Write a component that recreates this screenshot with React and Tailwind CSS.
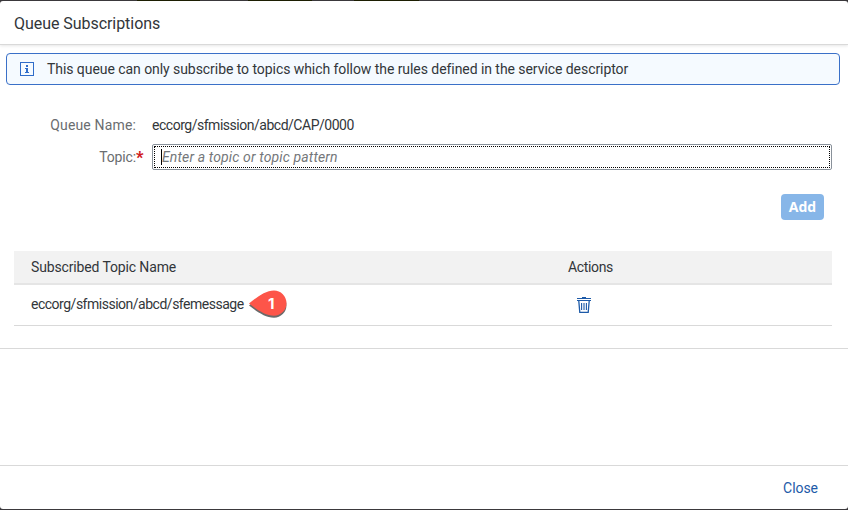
import React from "react";

function InfoIcon() {
  return (
    <svg className="block h-[14px] w-[14px]" viewBox="0 0 14 14" fill="none">
      <rect x="0.5" y="0.5" width="13" height="13" stroke="#2f6cc9" />
      <path d="M6 3h2v2H6zM5 6h3v4h1v1H5v-1h1V7H5z" fill="#2f6cc9" />
    </svg>
  );
}

function TrashIcon() {
  return (
    <svg className="block h-4 w-[14px]" viewBox="0 0 14 16" fill="none" stroke="#1d5aa8">
      <path d="M5 0.5h4M0 1.5h14M0 3.5h14" />
      <path d="M1.8 4l1 11.5h8.4l1-11.5" strokeWidth="1.3" />
      <path d="M4.6 6v7M7 6v7M9.4 6v7" strokeWidth="1.1" />
    </svg>
  );
}

function Marker() {
  return (
    <span className="relative ml-[4px] block h-[32px] w-[42px]">
      <svg className="block h-full w-full overflow-visible" viewBox="0 0 42 32">
        <path
          d="M1 14.5C8 9 17 1.5 26 1.5A12.4 12.6 0 0 1 26 26.8C17 26.8 8 20 1 14.5Z"
          fill="#6a6a6a"
          transform="translate(0 2)"
        />
        <path d="M1 14.5C8 9 17 1.5 26 1.5A12.4 12.6 0 0 1 26 26.8C17 26.8 8 20 1 14.5Z" fill="#fd5549" />
      </svg>
      <span className="absolute left-[20px] top-[6px] font-['Inter'] text-[15px] leading-[18px] font-bold text-white">
        1
      </span>
    </span>
  );
}

export default function App() {
  return (
    <div className="h-[510px] w-[848px] overflow-hidden bg-[#3b393c] font-['Roboto',sans-serif] text-[14px] leading-4 text-[#32363a]">
      <div className="flex h-px pl-[137px]">
        <span className="h-px w-[63px] bg-[#1d1f02]" />
        <span className="ml-12 h-px w-16 bg-[#1d1f02]" />
        <span className="ml-[42px] h-px w-[65px] bg-[#1d1f02]" />
      </div>
      <div className="flex h-[508px] flex-col rounded-[3px] bg-white">
        <header className="z-10 flex h-11 shrink-0 items-center border-b border-[#d9d9d9] pt-[2px] pl-[14px] text-[16px] shadow-[0_1px_3px_rgba(0,0,0,0.1)]">
          <span className="tracking-[-0.05px]">Queue Subscriptions</span>
        </header>

        <main className="flex h-[304px] shrink-0 flex-col border-b border-[#d9d9d9] pt-2">
          <div className="ml-[6px] flex h-8 w-[834px] shrink-0 items-center rounded border border-[#3a70c8] bg-[#f5faff] pl-[13px]">
            <InfoIcon />
            <span className="ml-[13px] tracking-[-0.06px]">
              This queue can only subscribe to topics which follow the rules defined in the service descriptor
            </span>
          </div>

          <div className="mt-8 flex h-4 shrink-0">
            <span className="w-[136px] text-right tracking-[0.15px] text-[#6a6d70]">Queue Name:</span>
            <span className="ml-4 tracking-[-0.48px]">eccorg/sfmission/abcd/CAP/0000</span>
          </div>

          <div className="mt-[11px] flex h-[26px] shrink-0 items-center">
            <span className="w-[136px] text-right tracking-[-0.15px] text-[#6a6d70]">Topic:</span>
            <span className="h-[14px] w-[7px] text-[16px] font-black text-[#d01820]">*</span>
            <div className="ml-[9px] h-[26px] w-[680px] rounded-[2px] border border-[#89919a] p-px">
              <div className="flex h-full items-center border border-dotted border-black pl-[6px] tracking-[0.13px] italic text-[#74777a]">
                <span className="h-4 w-px bg-black" />
                Enter a topic or topic pattern
              </div>
            </div>
          </div>

          <button className="mt-6 ml-[781px] h-[26px] w-[43px] shrink-0 rounded bg-[#87b6e8] font-['Open_Sans'] text-[14px] font-bold text-white">
            Add
          </button>

          <section className="mt-[31px] ml-[14px] w-[818px]">
            <div className="flex h-[34px] items-center border-b-2 border-[#e5e5e5] bg-[#f2f2f2] pl-[17px]">
              <span className="w-[537px] tracking-[-0.14px]">Subscribed Topic Name</span>
              <span className="tracking-[-0.35px]">Actions</span>
            </div>
            <div className="flex h-[41px] items-center border-b border-[#d9d9d9] pl-[17px]">
              <div className="flex w-[546px] items-center">
                <span className="w-[213px] pb-[2px] tracking-[-0.49px]">eccorg/sfmission/abcd/sfemessage</span>
                <Marker />
              </div>
              <TrashIcon />
            </div>
          </section>
        </main>

        <div className="flex-1" />

        <footer className="flex h-11 shrink-0 items-center justify-end border-t border-[#d9d9d9] pr-[30px] tracking-[-0.05px] text-[#1d5aa8]">
          Close
        </footer>
      </div>
    </div>
  );
}
